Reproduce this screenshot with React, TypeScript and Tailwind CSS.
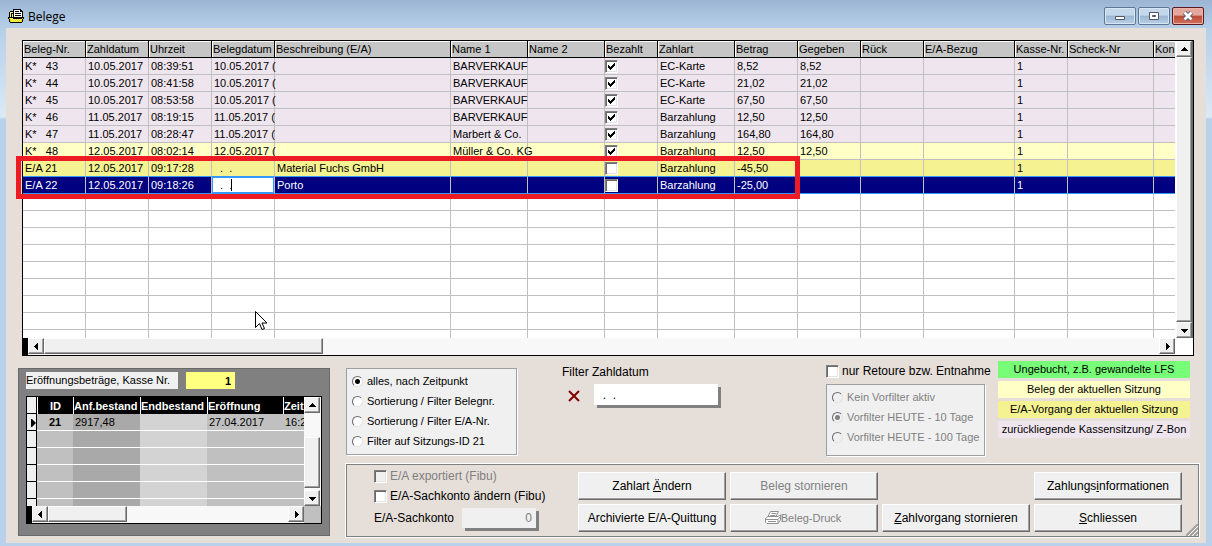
import type { ReactNode } from "react";
import clsx from "clsx";

const columns = [
  { title: "Beleg-Nr.", width: "w-[63px]" },
  { title: "Zahldatum", width: "w-[63px]" },
  { title: "Uhrzeit", width: "w-[63px]" },
  { title: "Belegdatum", width: "w-[63px]" },
  { title: "Beschreibung (E/A)", width: "w-[176px]" },
  { title: "Name 1", width: "w-[77px]" },
  { title: "Name 2", width: "w-[77px]" },
  { title: "Bezahlt", width: "w-[53px]" },
  { title: "Zahlart", width: "w-[77px]" },
  { title: "Betrag", width: "w-[63px]" },
  { title: "Gegeben", width: "w-[63px]" },
  { title: "Rück", width: "w-[63px]" },
  { title: "E/A-Bezug", width: "w-[91px]" },
  { title: "Kasse-Nr.", width: "w-[53px]" },
  { title: "Scheck-Nr", width: "w-[86px]" },
  { title: "Kon", width: "" },
];

type Kind = "closed" | "receipt" | "expense" | "selected";

interface Beleg {
  nr: string;
  zahldatum: string;
  uhrzeit: string;
  belegdatum: string;
  text: string;
  name: string;
  bezahlt: boolean;
  zahlart: string;
  betrag: string;
  gegeben: string;
  kind: Kind;
}

const belege: Beleg[] = [
  { nr: "K*   43", zahldatum: "10.05.2017", uhrzeit: "08:39:51", belegdatum: "10.05.2017 (", text: "", name: "BARVERKAUF", bezahlt: true, zahlart: "EC-Karte", betrag: "8,52", gegeben: "8,52", kind: "closed" },
  { nr: "K*   44", zahldatum: "10.05.2017", uhrzeit: "08:41:58", belegdatum: "10.05.2017 (", text: "", name: "BARVERKAUF", bezahlt: true, zahlart: "EC-Karte", betrag: "21,02", gegeben: "21,02", kind: "closed" },
  { nr: "K*   45", zahldatum: "10.05.2017", uhrzeit: "08:53:58", belegdatum: "10.05.2017 (", text: "", name: "BARVERKAUF", bezahlt: true, zahlart: "EC-Karte", betrag: "67,50", gegeben: "67,50", kind: "closed" },
  { nr: "K*   46", zahldatum: "11.05.2017", uhrzeit: "08:19:15", belegdatum: "11.05.2017 (", text: "", name: "BARVERKAUF", bezahlt: true, zahlart: "Barzahlung", betrag: "12,50", gegeben: "12,50", kind: "closed" },
  { nr: "K*   47", zahldatum: "11.05.2017", uhrzeit: "08:28:47", belegdatum: "11.05.2017 (", text: "", name: "Marbert & Co.", bezahlt: true, zahlart: "Barzahlung", betrag: "164,80", gegeben: "164,80", kind: "closed" },
  { nr: "K*   48", zahldatum: "12.05.2017", uhrzeit: "08:02:14", belegdatum: "12.05.2017 (", text: "", name: "Müller & Co. KG", bezahlt: true, zahlart: "Barzahlung", betrag: "12,50", gegeben: "12,50", kind: "receipt" },
  { nr: "E/A 21", zahldatum: "12.05.2017", uhrzeit: "09:17:28", belegdatum: "  .  .", text: "Material Fuchs GmbH", name: "", bezahlt: false, zahlart: "Barzahlung", betrag: "-45,50", gegeben: "", kind: "expense" },
  { nr: "E/A 22", zahldatum: "12.05.2017", uhrzeit: "09:18:26", belegdatum: "  .  .", text: "Porto", name: "", bezahlt: false, zahlart: "Barzahlung", betrag: "-25,00", gegeben: "", kind: "selected" },
];

const rowColor: Record<Kind, string> = {
  closed: "bg-[#efe5ee]",
  receipt: "bg-[#ffffc6]",
  expense: "bg-[#f5f292]",
  selected: "bg-[#000080] text-white",
};

const legend = [
  { text: "Ungebucht, z.B. gewandelte LFS", color: "bg-[#77fd77]" },
  { text: "Beleg der aktuellen Sitzung", color: "bg-[#ffffc6]" },
  { text: "E/A-Vorgang der aktuellen Sitzung", color: "bg-[#f5f292]" },
  { text: "zurückliegende Kassensitzung/ Z-Bon", color: "bg-[#efe5ee]" },
];

const bevel =
  "bg-[#f0f0f0] border border-t-white border-l-white border-r-[#696969] border-b-[#696969] shadow-[inset_-1px_-1px_#a0a0a0]";

const CheckBox = ({ id, label, checked = false, disabled = false }: { id?: string; label?: string; checked?: boolean; disabled?: boolean }) => (
  <span className="grid h-[13px] w-[13px] shrink-0">
    <input
      id={id}
      type="checkbox"
      aria-label={label}
      defaultChecked={checked}
      disabled={disabled}
      className={clsx(
        "peer m-0 h-[13px] w-[13px] appearance-none border border-t-[#808080] border-l-[#808080] border-r-white border-b-white shadow-[inset_1px_1px_#696969,inset_-1px_-1px_#e3e3e3] [grid-area:1/1]",
        disabled ? "bg-[#f0f0f0]" : "bg-white"
      )}
    />
    <svg viewBox="0 0 13 13" className="pointer-events-none hidden text-black [grid-area:1/1] peer-checked:block" shapeRendering="crispEdges">
      <path d="M3 5h1v1h1v1h1v-1h1v-1h1v-1h1v-1h1v3h-1v1h-1v1h-1v1h-1v1h-1v-1h-1v-1h-1z" fill="currentColor" />
    </svg>
  </span>
);

const Radio = ({ name, label, checked = false, disabled = false }: { name: string; label: string; checked?: boolean; disabled?: boolean }) => (
  <label className={clsx("flex h-5 items-center gap-1 whitespace-nowrap text-[11px]", disabled && "text-[#808080]")}>
    <input
      type="radio"
      name={name}
      defaultChecked={checked}
      disabled={disabled}
      className={clsx(
        "m-0 h-[11px] w-[11px] appearance-none rounded-full border border-t-[#696969] border-l-[#696969] border-r-[#e3e3e3] border-b-[#e3e3e3]",
        disabled
          ? "bg-[#f0f0f0] checked:bg-[radial-gradient(circle,#808080_2px,#f0f0f0_3px)]"
          : "bg-white checked:bg-[radial-gradient(circle,#000_2px,#fff_3px)]"
      )}
    />
    {label}
  </label>
);

const arrows = {
  up: "M4 9h7v-1h-1v-1h-1v-1h-1v-1h-1v1h-1v1h-1v1h-1z",
  down: "M4 6h7v1h-1v1h-1v1h-1v1h-1v-1h-1v-1h-1v-1h-1z",
  left: "M9 4v7h-1v-1h-1v-1h-1v-1h-1v-1h1v-1h1v-1h1v-1z",
  right: "M6 4v7h1v-1h1v-1h1v-1h1v-1h-1v-1h-1v-1h-1v-1z",
};

const ScrollButton = ({ dir }: { dir: keyof typeof arrows }) => (
  <button type="button" aria-label={`Scroll ${dir}`} className={clsx(bevel, "flex h-4 w-4 shrink-0 items-center justify-center")}>
    <svg viewBox="0 0 15 15" className="h-[15px] w-[15px] shrink-0" shapeRendering="crispEdges">
      <path d={arrows[dir]} />
    </svg>
  </button>
);

const PushButton = ({ children, disabled = false, className = "text-[12px]" }: { children: ReactNode; disabled?: boolean; className?: string }) => (
  <button
    type="button"
    disabled={disabled}
    className={clsx(
      bevel,
      "flex h-7 w-[148px] items-center justify-center leading-4 whitespace-nowrap disabled:text-[#808080]",
      className
    )}
  >
    {children}
  </button>
);

const TitleBar = () => (
  <header className="flex h-7 items-center px-[2px]">
    <svg viewBox="0 0 16 14" className="mt-1 h-[14px] w-4" shapeRendering="crispEdges">
      <path d="M5 0h8v1h1v1h1v6h1v2h-1v3h-1v1h-12v-1h-1v-3h-1v-2h1v-5h1v-1h3z" fill="#000" />
      <path d="M6 1h6v2h2v5h-8z" fill="#fff" />
      <path d="M7 2h4v1h-4zM7 4h6v1h-6zM7 6h6v1h-6z" fill="#000" />
      <path d="M2 3h3v1h-2v4h-1zM4 5h1v3h-1z" fill="#ffff60" />
      <path d="M1 9h4v1h9v-1h1v1h-1v3h-12v-3h-1z" fill="#e8d800" />
      <path d="M2 9h1v1h-1zM4 9h1v1h-1zM3 10h1v1h-1zM5 10h1v1h-1zM7 10h1v1h-1zM9 10h1v1h-1zM11 10h1v1h-1zM13 10h1v1h-1zM4 11h1v1h-1zM6 11h1v1h-1zM8 11h1v1h-1zM10 11h1v1h-1zM12 11h1v1h-1zM3 12h1v1h-1zM5 12h1v1h-1zM7 12h1v1h-1zM9 12h1v1h-1zM11 12h1v1h-1z" fill="#ffff80" />
    </svg>
    <h1 className="mt-[6px] ml-1 font-['Open_Sans','Noto_Sans',sans-serif] text-[12px] leading-4">Belege</h1>
    <div className="mt-1 ml-auto flex gap-[2px]">
      <button type="button" aria-label="Minimieren" className="flex h-[18px] w-8 items-center justify-center rounded-xs border border-[#5d7794] bg-[linear-gradient(#c4d8ed_0_45%,#9ab6d3_50%,#b7d0e8)] shadow-[inset_0_0_0_1px_#d8e6f4]">
        <svg viewBox="0 0 12 10" className="h-[10px] w-3">
          <path d="M1.500 5.500h9v3h-9z" fill="#fff" stroke="#535666" />
        </svg>
      </button>
      <button type="button" aria-label="Maximieren" className="flex h-[18px] w-8 items-center justify-center rounded-xs border border-[#5d7794] bg-[linear-gradient(#c4d8ed_0_45%,#9ab6d3_50%,#b7d0e8)] shadow-[inset_0_0_0_1px_#d8e6f4]">
        <svg viewBox="0 0 12 10" className="h-[10px] w-3">
          <path d="M1.500 1.500h9v7h-9z" fill="#fff" stroke="#535666" />
          <path d="M4.500 4.500h3v1h-3z" fill="#9ab6d3" stroke="#535666" />
        </svg>
      </button>
      <button type="button" aria-label="Fenster schliessen" className="flex h-[18px] w-8 items-center justify-center rounded-xs border border-[#5a1a20] bg-[linear-gradient(#e3a79c_0_45%,#bd4a34_50%,#d2705c)] shadow-[inset_0_0_0_1px_#e9b3a8]">
        <svg viewBox="0 0 12 10" className="h-[10px] w-3">
          <path d="M2.500 1.500l7 7M9.500 1.500l-7 7" stroke="#535666" strokeWidth="4.500" />
          <path d="M2.500 1.500l7 7M9.500 1.500l-7 7" stroke="#fff" strokeWidth="2.800" />
        </svg>
      </button>
    </div>
  </header>
);

const cell = "h-[17px] border-r border-b p-0 leading-4 whitespace-pre";

const BelegRow = ({ beleg }: { beleg: Beleg }) => {
  const selected = beleg.kind === "selected";
  const edge = selected || beleg.kind === "expense" ? "border-[#c0c0c0] border-b-[#3399ff]" : "border-[#c0c0c0]";
  const td = clsx(cell, edge, "pl-[2px]");
  return (
    <tr className={rowColor[beleg.kind]}>
      <td className={td}>{beleg.nr}</td>
      <td className={td}>{beleg.zahldatum}</td>
      <td className={td}>{beleg.uhrzeit}</td>
      {selected ? (
        <td className={clsx(cell, edge, "relative")}>
          <input
            aria-label="Belegdatum"
            defaultValue={beleg.belegdatum}
            className="block h-4 w-full border border-[#3399ff] bg-white pl-px text-black outline-none"
          />
          <span className="pointer-events-none absolute top-[2px] left-[19px] h-3 w-px bg-black" />
        </td>
      ) : (
        <td className={td}>{beleg.belegdatum}</td>
      )}
      <td className={td}>{beleg.text}</td>
      <td className={td}>{beleg.name}</td>
      <td className={td} />
      <td className={clsx(cell, edge)}>
        <CheckBox label={`${beleg.nr} bezahlt`} checked={beleg.bezahlt} />
      </td>
      <td className={td}>{beleg.zahlart}</td>
      <td className={td}>{beleg.betrag}</td>
      <td className={td}>{beleg.gegeben}</td>
      <td className={td} />
      <td className={td} />
      <td className={td}>1</td>
      <td className={td} />
      <td className={clsx(td, "border-r-0")} />
    </tr>
  );
};

const BelegGrid = () => (
  <section className="relative mt-3 mr-3 ml-4 border border-black bg-white">
    <div className="flex">
      <div className="h-[297px] min-w-0 flex-1 overflow-hidden">
        <table className="w-full table-fixed border-separate border-spacing-0 text-[11px]">
          <thead>
            <tr>
              {columns.map((c) => (
                <th
                  key={c.title}
                  className={clsx(
                    c.width,
                    "h-[17px] border-r border-b border-black bg-[#c6c6c6] p-0 pl-px text-left leading-4 font-normal whitespace-nowrap shadow-[inset_1px_1px_#fff] last:border-r-0"
                  )}
                >
                  {c.title}
                </th>
              ))}
            </tr>
          </thead>
          <tbody>
            {belege.map((b) => (
              <BelegRow key={b.nr} beleg={b} />
            ))}
            {Array.from({ length: 9 }, (_, i) => (
              <tr key={i}>
                {columns.map((c) => (
                  <td key={c.title} className={clsx(cell, "border-[#c0c0c0] last:border-r-0")} />
                ))}
              </tr>
            ))}
          </tbody>
        </table>
      </div>
      <div className="flex w-[18px] flex-col border-r border-[#696969] bg-white pl-px">
        <ScrollButton dir="up" />
        <div className={clsx(bevel, "w-4 flex-1")} />
        <ScrollButton dir="down" />
      </div>
    </div>
    <div className="flex h-[17px] border-l-[5px] border-black bg-[#f8f8f8]">
      <ScrollButton dir="left" />
      <div className={clsx(bevel, "h-4 w-[279px]")} />
      <div className="ml-auto flex">
        <ScrollButton dir="right" />
      </div>
      <div className="w-[18px] bg-white" />
    </div>

    {/* marker around the two E/A entries */}
    <div className="pointer-events-none absolute top-[115px] -left-[7px] h-[43px] w-[784px] border-[5px] border-[#ed1c24]" />

    <svg viewBox="0 0 12 19" className="pointer-events-none absolute top-[270px] left-[232px] h-[19px] w-3">
      <path d="M.5 .5v16l4-4 2.500 6 2.500-1-2.500-5.500h5z" fill="#fff" stroke="#000" strokeWidth="1" />
    </svg>
  </section>
);

const SessionPanel = () => {
  const td = "h-[17px] overflow-hidden border-b border-white p-0 leading-4 whitespace-nowrap";
  const th = "h-[17px] overflow-hidden border-l border-white bg-black p-0 leading-4 font-bold whitespace-nowrap text-white";
  return (
    <section className="mt-[7px] w-[312px] shrink-0 border border-[#696969] bg-[#808080] px-[7px] pt-[3px] pb-[11px]">
      <div className="flex gap-2">
        <label htmlFor="kasse" className="h-[17px] w-[152px] bg-[#f0f0f0] text-[11px] leading-4 whitespace-nowrap">
          Eröffnungsbeträge, Kasse Nr.
        </label>
        <input id="kasse" defaultValue="1" className="h-[17px] w-[49px] bg-[#ffff80] pr-1 text-right text-[11px] font-bold" />
      </div>
      <div className="mt-[7px] border border-black">
        <div className="flex">
          <div className="h-[109px] min-w-0 flex-1 overflow-hidden">
            <table className="w-full table-fixed border-separate border-spacing-0 text-[11px]">
              <thead>
                <tr>
                  <td className="w-[10px] border-r border-b border-black bg-[#f0f0f0] p-0" />
                  <th className={clsx(th, "w-9 text-center")}>ID</th>
                  <th className={clsx(th, "w-[67px] text-left")}>Anf.bestand</th>
                  <th className={clsx(th, "w-[67px] text-left")}>Endbestand</th>
                  <th className={clsx(th, "w-[76px] text-left")}>Eröffnung</th>
                  <th className={clsx(th, "text-left")}>Zeit</th>
                </tr>
              </thead>
              <tbody>
                {Array.from({ length: 6 }, (_, i) => (
                  <tr key={i}>
                    <td className="h-[17px] border-r border-b border-black bg-[#f0f0f0] p-0">
                      {i === 0 && (
                        <svg viewBox="0 0 9 16" className="block h-4 w-[9px]">
                          <path d="M4 5h1l4 4-4 4h-1z" />
                        </svg>
                      )}
                    </td>
                    <td className={clsx(td, "bg-[#c0c0c0] text-center font-bold")}>{i === 0 && "21"}</td>
                    <td className={clsx(td, "bg-[#a9a9a9] pl-[2px]")}>{i === 0 && "2917,48"}</td>
                    <td className={clsx(td, "bg-[#d3d3d3]")} />
                    <td className={clsx(td, "bg-[#c0c0c0] pl-[2px]")}>{i === 0 && "27.04.2017"}</td>
                    <td className={clsx(td, "bg-[#c0c0c0] pl-[2px]")}>{i === 0 && "16:2"}</td>
                  </tr>
                ))}
              </tbody>
            </table>
          </div>
          <div className="flex w-[17px] flex-col bg-[#f8f8f8]">
            <ScrollButton dir="up" />
            <div className={clsx(bevel, "mt-6 mb-[2px] w-4 flex-1")} />
            <ScrollButton dir="down" />
          </div>
        </div>
        <div className="flex h-[17px] border-l-[5px] border-black bg-[#f8f8f8]">
          <ScrollButton dir="left" />
          <div className={clsx(bevel, "h-4 w-[79px]")} />
          <div className="ml-auto flex">
            <ScrollButton dir="right" />
          </div>
          <div className="w-[17px] bg-[#c0c0c0]" />
        </div>
      </div>
    </section>
  );
};

const groupBox = "border border-[#a0a0a0] bg-[#f0f0f0] shadow-[1px_1px_#fff]";

const FilterRow = () => (
  <div className="flex items-start">
    <fieldset className={clsx(groupBox, "mt-[7px] h-[87px] w-[171px] pt-[2px] pl-[5px]")}>
      <Radio name="sort" label="alles, nach Zeitpunkt" checked />
      <Radio name="sort" label="Sortierung / Filter Belegnr." />
      <Radio name="sort" label="Sortierung / Filter E/A-Nr." />
      <Radio name="sort" label="Filter auf Sitzungs-ID 21" />
    </fieldset>

    <div className="mt-[3px] ml-[45px]">
      <label htmlFor="zahldatum" className="block text-[12px] leading-4">
        Filter Zahldatum
      </label>
      <div className="mt-1 flex items-start">
        <button type="button" aria-label="Filter löschen" className="flex h-6 w-8 items-center pl-[6px]">
          <svg viewBox="0 0 12 12" className="h-3 w-3">
            <path d="M1 1l10 10M11 1l-10 10" stroke="#800000" strokeWidth="2" />
          </svg>
        </button>
        <input
          id="zahldatum"
          defaultValue="  .  ."
          className="h-[21px] w-[124px] bg-white pl-[2px] text-[12px] shadow-[3px_3px_#808080]"
        />
      </div>
    </div>

    <div className="mt-[2px] ml-auto w-[172px]">
      <div className="flex items-center gap-[3px]">
        <CheckBox id="retoure" />
        <label htmlFor="retoure" className="text-[12px] leading-4 whitespace-nowrap">
          nur Retoure bzw. Entnahme
        </label>
      </div>
      <fieldset className={clsx(groupBox, "mt-[5px] h-[72px] w-[159px] pt-[2px] pl-[5px]")}>
        <Radio name="vorfilter" label="Kein Vorfilter aktiv" disabled />
        <Radio name="vorfilter" label="Vorfilter HEUTE - 10 Tage" checked disabled />
        <Radio name="vorfilter" label="Vorfilter HEUTE - 100 Tage" disabled />
      </fieldset>
    </div>

    <ul className="mr-[9px] flex w-48 flex-col gap-[3px] text-center text-[11px]">
      {legend.map((l) => (
        <li key={l.text} className={clsx(l.color, "h-[17px] leading-4 whitespace-nowrap")}>
          {l.text}
        </li>
      ))}
    </ul>
  </div>
);

const PrinterIcon = () => (
  <svg viewBox="0 0 16 14" className="h-[14px] w-4" fill="#fff" stroke="#909090">
    <path d="M5.500 .5h8l-2.500 5h-8z" />
    <path d="M6.500 2.500h5M5.500 4.500h5" />
    <path d="M3 5.500h10l2.500-1.500v5l-2.500 3.500h-11l-1.500-1.500v-3.500z" />
    <path d="M.5 8.500h12.500l2.500-3M3 10.500h8M13 8.500v4" fill="none" />
  </svg>
);

const ActionPanel = () => (
  <div className="relative mt-2 flex h-[73px] border border-[#808080] pt-[7px] pr-4 shadow-[0_0_0_1px_#fff]">
    <div className="ml-[27px] text-[12px] leading-4">
      <div className="-mt-1 flex h-4 items-center gap-[3px] text-[#808080]">
        <CheckBox id="exportiert" disabled />
        <label htmlFor="exportiert">E/A exportiert (Fibu)</label>
      </div>
      <div className="mt-1 flex h-4 items-center gap-[3px]">
        <CheckBox id="aendern" />
        <label htmlFor="aendern" className="whitespace-nowrap">
          E/A-Sachkonto ändern (Fibu)
        </label>
      </div>
      <div className="mt-1 flex items-center">
        <label htmlFor="sachkonto" className="w-[88px]">
          E/A-Sachkonto
        </label>
        <input
          id="sachkonto"
          disabled
          defaultValue="0"
          className="h-5 w-[74px] bg-[#f0f0f0] pr-1 text-right text-[#808080] shadow-[3px_3px_#808080]"
        />
      </div>
    </div>
    <div className="ml-auto grid grid-cols-4 content-start gap-1">
      <PushButton>
        Zahlart&nbsp;<u>Ä</u>ndern
      </PushButton>
      <PushButton disabled>Beleg stornieren</PushButton>
      <PushButton className="col-start-4 text-[12px]">
        Zahlungs<u>i</u>nformationen
      </PushButton>
      <PushButton>Archivierte E/A-Quittung</PushButton>
      <PushButton disabled className="pr-[2px] text-[11px]">
        <PrinterIcon />
        Beleg-Druck
      </PushButton>
      <PushButton>
        <u>Z</u>ahlvorgang stornieren
      </PushButton>
      <PushButton>
        <u>S</u>chliessen
      </PushButton>
    </div>
    <svg viewBox="0 0 12 12" className="absolute right-0 bottom-0 h-3 w-3">
      <path d="M0 12L12 0M4 12L12 4M8 12L12 8" stroke="#a0a0a0" strokeWidth="2" />
      <path d="M2 12L12 2M6 12L12 6" stroke="#fff" strokeWidth="1" />
    </svg>
  </div>
);

const App = () => {
  return (
    <div className="flex min-h-screen flex-col bg-[linear-gradient(#9bb5d3_0,#b6cfe9_28px,#dce9f5_117px,#b9d1ea_119px)] px-[6px] pb-[3px] font-['Liberation_Sans',Arial,sans-serif] text-black">
      <TitleBar />
      <main className="flex-1 bg-[#e6ded9]">
        <BelegGrid />
        <div className="mt-[5px] flex items-start gap-4 pr-[7px] pb-[5px] pl-3">
          <SessionPanel />
          <div className="min-w-0 flex-1">
            <FilterRow />
            <ActionPanel />
          </div>
        </div>
      </main>
    </div>
  );
};

export default App;
